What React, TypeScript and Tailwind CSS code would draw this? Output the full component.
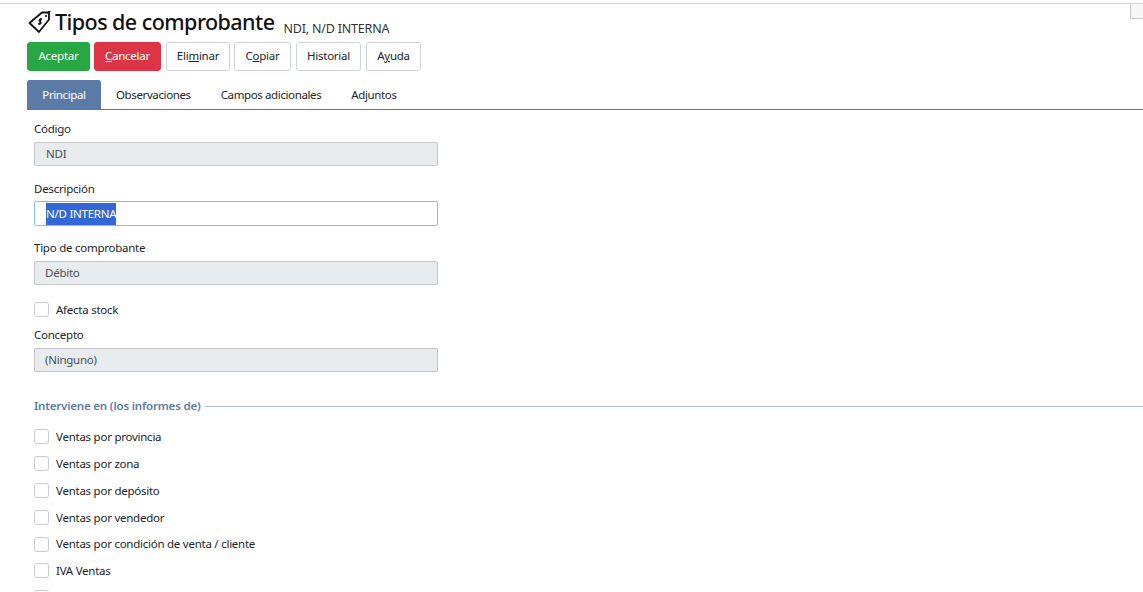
function Btn({ children, cls }: { children: React.ReactNode; cls: string }) {
  return <button className={`h-[29px] pb-[2px] rounded-[3px] border text-[11.5px] tracking-[-0.25px] leading-none ${cls}`}>{children}</button>;
}
function Check({ label, cls = "h-[27px]" }: { label: string; cls?: string }) {
  return (
    <div className={`flex items-center ${cls}`}>
      <span className="w-[15px] h-[15px] rounded-[3px] border border-[#cccccc] bg-white shrink-0" />
      <span className="ml-[7px] text-[#212529]">{label}</span>
    </div>
  );
}
function Field({ label, value, mt, ml = "pl-[11px]" }: { label: string; value: string; mt: string; ml?: string }) {
  return (
    <div className={mt}>
      <div className="h-[18px] leading-[18px] text-[#212529]">{label}</div>
      <div className={`mt-[4px] w-[404px] h-[24px] border border-[#c4c6c8] rounded-[2px] bg-[#e9ecef] flex items-center text-[#495057] ${ml}`}>{value}</div>
    </div>
  );
}
export default function App() {
  return (
    <div className="relative h-[592px] overflow-hidden bg-white pt-[3px] font-['Noto_Sans','Open_Sans',sans-serif] text-[#212529] text-[11.5px] tracking-[-0.25px]">
      <div className="absolute right-0 top-[4px] w-[13px] h-[15px] bg-[#f7f7f7] border-l border-b border-[#c8c8c8] rounded-bl-[2px]" />
      <div className="border-t border-[#d4d4d4] pl-[27px] pt-[5px]">
        <div className="flex items-end h-[26px]">
          <svg width="24" height="24" viewBox="0 0 24 24" className="mb-[1px] ml-[1px] shrink-0" fill="none" stroke="#111" strokeWidth="1.8" strokeLinejoin="round">
            <path d="M1.5 13 L14 2.5 L21 2.5 L21 9.5 L11 22 Z" />
            <circle cx="18" cy="6" r="1.1" fill="#111" stroke="none" />
            <path d="M14 9.6c-.8-.9-2.6-.6-2.9.5-.3 1.4 2.2 1.6 1.9 3-.3 1.1-2 1.3-2.9.4M13.2 7.8l-1.8 7" strokeWidth="1.3" />
            <path d="M19.5 3.5c.5-1.3 1.5-2.2 3-2" strokeWidth="1.2" />
          </svg>
          <span className="ml-[3px] text-[21.5px] leading-[26px] font-medium text-[#111] tracking-[-0.55px]">Tipos de comprobante</span>
          <span className="ml-[9px] mb-[-2px] leading-[17px] text-[12.5px] tracking-[-0.2px] text-[#333]">NDI, N/D INTERNA</span>
        </div>
        <div className="flex mt-[7px]">
          <Btn cls="w-[63px] bg-[#28a745] border-[#28a745] text-white">Aceptar</Btn>
          <Btn cls="w-[67px] ml-[4px] bg-[#dc3545] border-[#dc3545] text-white"><u>C</u>ancelar</Btn>
          <Btn cls="w-[64px] ml-[5px] bg-white border-[#ced4da] text-[#212529]">Eli<u>m</u>inar</Btn>
          <Btn cls="w-[57px] ml-[4px] bg-white border-[#ced4da] text-[#212529]">C<u>o</u>piar</Btn>
          <Btn cls="w-[65px] ml-[5px] bg-white border-[#ced4da] text-[#212529]">Historial</Btn>
          <Btn cls="w-[55px] ml-[5px] bg-white border-[#ced4da] text-[#212529]">A<u>y</u>uda</Btn>
        </div>
        <div className="flex mt-[9px] h-[30px] border-b border-[#5b7ba6] tracking-[-0.38px]">
          <div className="w-[74px] h-[30px] flex items-center justify-center bg-[#5b7ba6] text-white rounded-t-[3px]">Principal</div>
          <div className="ml-[15px] flex items-center">Observaciones</div>
          <div className="ml-[30px] flex items-center">Campos adicionales</div>
          <div className="ml-[30px] flex items-center">Adjuntos</div>
        </div>
        <div className="pl-[7px]">
          <Field label="Código" value="NDI" mt="mt-[10px]" />
          <div className="mt-[14px]">
            <div className="h-[18px] leading-[18px]">Descripción</div>
            <div className="mt-[3px] w-[404px] h-[25px] border border-[#80bdff] rounded-[2px] bg-white flex items-center pl-[11px]">
              <span className="h-[22px] leading-[22px] bg-[#3367d6] text-white">N/D INTERNA</span>
            </div>
          </div>
          <Field label="Tipo de comprobante" value="Débito" mt="mt-[13px]" ml="pl-[10px]" />
          <Check label="Afecta stock" cls="h-[15px] mt-[17px]" />
          <Field label="Concepto" value="(Ninguno)" mt="mt-[9px]" ml="pl-[10px]" />
          <div className="flex items-center mt-[25px] h-[18px]">
            <span className="font-semibold text-[#5b7ba6] tracking-[-0.18px]">Interviene en (los informes de)</span>
            <div className="flex-1 ml-[4px] border-t border-[#b0bccb]" />
          </div>
          <div className="mt-[8px]">
            {["Ventas por provincia","Ventas por zona","Ventas por depósito","Ventas por vendedor","Ventas por condición de venta / cliente","IVA Ventas",""].map((t,i) => (
              <Check key={i} label={t} cls={i === 4 ? "h-[26px]" : "h-[27px]"} />
            ))}
          </div>
        </div>
      </div>
    </div>
  );
}
